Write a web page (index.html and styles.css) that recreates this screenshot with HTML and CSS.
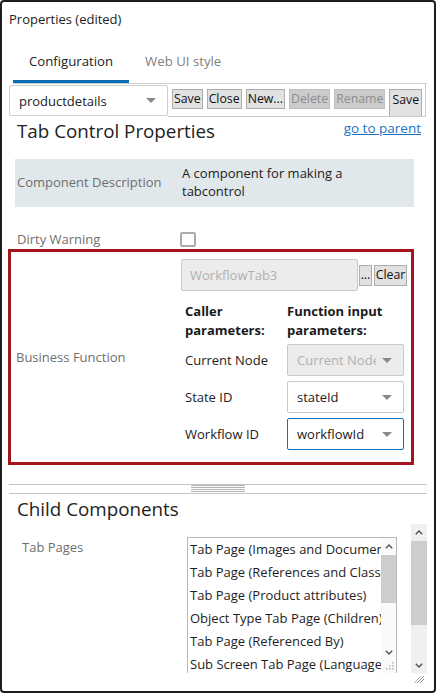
FILE: index.html
```html
<!DOCTYPE html>
<html>
<head>
<meta charset="utf-8">
<title>Properties</title>
<link rel="stylesheet" href="styles.css">
</head>
<body>
<div class="window">
  <div class="title">Properties (edited)</div>
  <div class="tabs">
    <div class="tab active">Configuration</div>
    <div class="tab">Web UI style</div>
  </div>
  <div class="toolbar">
    <div class="select main-select"><span class="sel-text">productdetails</span><span class="caret"></span></div>
    <div class="btnbar">
      <button class="btn">Save</button>
      <button class="btn">Close</button>
      <button class="btn">New...</button>
      <button class="btn" disabled>Delete</button>
      <button class="btn" disabled>Rename</button>
      <button class="btn btn-wrap">Save as</button>
    </div>
  </div>
  <div class="content">
    <div class="head-row">
      <h2 class="heading">Tab Control Properties</h2>
      <a class="link" href="#">go to parent</a>
    </div>
    <div class="desc-row">
      <div class="label">Component Description</div>
      <div class="desc-value">A component for making a tabcontrol</div>
    </div>
    <div class="dirty-row">
      <div class="label">Dirty Warning</div>
      <span class="checkbox"></span>
    </div>
    <div class="bf-box">
      <div class="label bf-label">Business Function</div>
      <div class="bf-main">
        <div class="bf-input-row">
          <div class="text-input">WorkflowTab3</div>
          <button class="btn btn-dots">...</button>
          <button class="btn btn-clear">Clear</button>
        </div>
        <div class="param-grid">
          <div class="param-head">Caller parameters:</div>
          <div class="param-head">Function input parameters:</div>
          <div class="param-label">Current Node</div>
          <div class="select param-select disabled"><span class="sel-text">Current Node</span><span class="caret"></span></div>
          <div class="param-label">State ID</div>
          <div class="select param-select"><span class="sel-text">stateId</span><span class="caret"></span></div>
          <div class="param-label">Workflow ID</div>
          <div class="select param-select focused"><span class="sel-text">workflowId</span><span class="caret"></span></div>
        </div>
      </div>
    </div>
  </div>
  <div class="splitter"><div class="grip"></div></div>
  <div class="child-head"><h2 class="heading">Child Components</h2></div>
  <div class="scrollpanel">
    <div class="panel-body">
      <div class="label tp-label">Tab Pages</div>
      <div class="listbox">
        <div class="list-items">
          <div class="item">Tab Page (Images and Documents)</div>
          <div class="item">Tab Page (References and Classifications)</div>
          <div class="item">Tab Page (Product attributes)</div>
          <div class="item">Object Type Tab Page (Children)</div>
          <div class="item">Tab Page (Referenced By)</div>
          <div class="item">Sub Screen Tab Page (Languages)</div>
        </div>
        <div class="mini-scroll">
          <div class="arrow mini-up"><svg width="8" height="5" viewBox="0 0 8 5"><polyline points="0.8,4.2 4,1 7.2,4.2" fill="none" stroke="#555" stroke-width="1.4"/></svg></div>
          <div class="thumb mini-thumb"></div>
          <div class="track-fill"></div>
          <div class="arrow mini-down"><svg width="8" height="5" viewBox="0 0 8 5"><polyline points="0.8,0.8 4,4 7.2,0.8" fill="none" stroke="#555" stroke-width="1.4"/></svg></div>
          <div class="mini-grip"><svg width="8" height="8" viewBox="0 0 8 8"><rect x="6" y="0" width="1.5" height="1.5" fill="#b5b5b5"/><rect x="3" y="3" width="1.5" height="1.5" fill="#b5b5b5"/><rect x="6" y="3" width="1.5" height="1.5" fill="#b5b5b5"/><rect x="0" y="6" width="1.5" height="1.5" fill="#b5b5b5"/><rect x="3" y="6" width="1.5" height="1.5" fill="#b5b5b5"/><rect x="6" y="6" width="1.5" height="1.5" fill="#b5b5b5"/></svg></div>
        </div>
      </div>
    </div>
    <div class="vscroll">
      <div class="arrow v-up"><svg width="8" height="5" viewBox="0 0 8 5"><polyline points="0.8,4.2 4,1 7.2,4.2" fill="none" stroke="#505050" stroke-width="1.4"/></svg></div>
      <div class="thumb v-thumb"></div>
      <div class="track-fill"></div>
      <div class="arrow v-down"><svg width="8" height="5" viewBox="0 0 8 5"><polyline points="0.8,0.8 4,4 7.2,0.8" fill="none" stroke="#505050" stroke-width="1.4"/></svg></div>
    </div>
  </div>
  <svg class="resize-grip" width="10" height="7" viewBox="0 0 10 7"><line x1="3" y1="7" x2="10" y2="0" stroke="#8a8a8a" stroke-width="1"/><line x1="6" y1="7" x2="10" y2="3" stroke="#8a8a8a" stroke-width="1"/><line x1="0" y1="7" x2="7" y2="0" stroke="#b0b0b0" stroke-width="1"/></svg>
</div>
</body>
</html>
```

FILE: styles.css
```css
* { box-sizing: border-box; }
html, body { margin: 0; padding: 0; background: #fff; }
body {
  font-family: "Open Sans", "Noto Sans", sans-serif;
  font-size: 13px;
  color: #222;
}
.window {
  width: 436px;
  height: 693px;
  border: 2px solid #1e1e1e;
  border-radius: 4px;
  position: relative;
  overflow: hidden;
  display: flex;
  flex-direction: column;
}
.title {
  padding: 8px 0 13px 7px;
  line-height: 18px;
  color: #222;
}
.tabs {
  display: flex;
  margin: 0 7px 0 11px;
  border-bottom: 1px solid #cfcfcf;
}
.tab {
  padding: 10px 16px 9px;
  line-height: 20px;
  font-size: 13.2px;
  color: #808080;
  border-bottom: 3px solid transparent;
}
.tab.active {
  color: #222;
  border-bottom-color: #0b6db5;
}
.toolbar {
  display: flex;
  align-items: flex-start;
}
.select {
  display: flex;
  align-items: center;
  justify-content: space-between;
  border: 1px solid #cfcfcf;
  border-radius: 2px;
  background: #fff;
  padding: 0 11px 0 9px;
  color: #222;
}
.sel-text {
  white-space: nowrap;
  overflow: hidden;
  flex: 1;
  min-width: 0;
}
.caret {
  width: 0;
  height: 0;
  border-left: 5px solid transparent;
  border-right: 5px solid transparent;
  border-top: 5px solid #8a8a8a;
  flex-shrink: 0;
  margin-left: 6px;
}
.main-select {
  margin: 1px 0 0 7px;
  width: 159px;
  height: 31px;
}
.btnbar {
  width: 258px;
  height: 33px;
  border-right: 1px solid #cccccc;
  border-bottom: 1px solid #cccccc;
  overflow: hidden;
  display: flex;
  gap: 4px;
  padding: 5px 0 0 4px;
  align-items: flex-start;
}
.btn {
  font-family: inherit;
  font-size: 12.3px;
  height: 20px;
  line-height: 18px;
  padding: 0 1px;
  border: 1px solid #adadad;
  background: #e1e1e1;
  color: #111;
  border-radius: 0;
  white-space: nowrap;
  flex-shrink: 0;
}
.btn:disabled {
  background: #cccccc;
  color: #8c8c8c;
  border-color: #bfbfbf;
}
.btn-wrap {
  height: auto;
  width: 33px;
  white-space: normal;
  line-height: 20px;
  padding: 0;
  text-align: center;
}
.content {
  padding: 0 20px 0 13px;
}
.head-row {
  display: flex;
  justify-content: space-between;
  align-items: flex-start;
  margin-top: 2px;
  margin-right: -7px;
}
.heading {
  margin: 0;
  font-size: 18.8px;
  font-weight: normal;
  line-height: 24px;
  padding-left: 2px;
  color: #222;
}
.link {
  font-size: 13.5px;
  line-height: 20px;
  color: #1a73c2;
  text-decoration: underline;
  margin-top: -1px;
}
.desc-row {
  margin-top: 16px;
  background: #e1e8eb;
  display: grid;
  grid-template-columns: 167px 1fr;
  align-items: center;
  padding: 5px 0 7px;
}
.label {
  color: #6f6f6f;
  padding-left: 2px;
  line-height: 18px;
}
.desc-value {
  line-height: 18px;
  width: 200px;
  color: #222;
}
.dirty-row {
  margin-top: 23px;
  display: grid;
  grid-template-columns: 165px 1fr;
  align-items: center;
  height: 18px;
}
.checkbox {
  display: block;
  width: 16px;
  height: 15px;
  border: 2px solid #ababab;
  border-radius: 2px;
}
.bf-box {
  margin: 1px 0 0 -7px;
  border: 3px solid #a3141d;
  display: flex;
}
.bf-label {
  width: 170px;
  flex-shrink: 0;
  padding-left: 5px;
  align-self: center;
}
.bf-main {
  flex: 1;
  padding: 7px 0 12px 0;
}
.bf-input-row {
  display: flex;
  align-items: center;
}
.text-input {
  width: 177px;
  height: 32px;
  border: 1px solid #c8c8c8;
  background: #ececec;
  color: #b0b0b0;
  border-radius: 2px;
  padding-left: 8px;
  display: flex;
  align-items: center;
}
.btn-dots {
  margin-left: 1px;
  width: 13px;
  height: 21px;
  padding: 0;
  text-align: center;
}
.btn-clear {
  margin-left: 2px;
  height: 21px;
  width: 33px;
  padding: 0;
  text-align: center;
}
.param-grid {
  display: grid;
  grid-template-columns: 102px 117px;
  row-gap: 5px;
  padding-left: 4px;
  margin-top: 11px;
  align-items: center;
}
.param-head {
  font-weight: bold;
  line-height: 19px;
  color: #1a1a1a;
  margin-bottom: -1px;
}
.param-label {
  line-height: 18px;
  color: #222;
}
.param-select {
  height: 32px;
  width: 117px;
  border-color: #c8c8c8;
}
.param-select.disabled {
  background: #ececec;
  color: #b0b0b0;
}
.param-select.focused {
  border-color: #1170c0;
}
.splitter {
  margin: 19px 7px 0 7px;
  height: 10px;
  border-top: 1px solid #c4c4c4;
  border-bottom: 1px solid #c4c4c4;
}
.grip {
  width: 54px;
  height: 7px;
  margin: 0 auto;
  background: repeating-linear-gradient(to bottom, #b4b4b4 0, #b4b4b4 1px, transparent 1px, transparent 2px);
}
.child-head {
  margin: 3px 0 0 13px;
}
.scrollpanel {
  margin-top: 3px;
  margin-right: 7px;
  height: 149px;
  display: flex;
}
.panel-body {
  flex: 1;
  overflow: hidden;
  display: flex;
  align-items: flex-start;
  padding-top: 13px;
}
.tp-label {
  width: 185px;
  flex-shrink: 0;
  padding-left: 20px;
  margin-top: 1px;
}
.listbox {
  width: 210px;
  height: 137px;
  flex-shrink: 0;
  border: 1px solid #b8b8b8;
  display: flex;
}
.list-items {
  flex: 1;
  min-width: 0;
  overflow: hidden;
  padding-left: 2px;
}
.item {
  line-height: 23px;
  white-space: nowrap;
  color: #1e1e1e;
}
.mini-scroll {
  width: 15px;
  flex-shrink: 0;
  display: flex;
  flex-direction: column;
  background: #fafafa;
}
.arrow {
  display: flex;
  align-items: center;
  justify-content: center;
}
.mini-up { height: 16px; }
.thumb { background: #cdcdcd; }
.mini-thumb { height: 48px; margin-top: 1px; }
.track-fill { flex: 1; }
.mini-down { height: 14px; }
.mini-grip {
  height: 14px;
  display: flex;
  align-items: flex-end;
  justify-content: flex-end;
  padding: 0 2px 3px 0;
}
.vscroll {
  width: 16px;
  flex-shrink: 0;
  display: flex;
  flex-direction: column;
  background: #f0f0f0;
}
.v-up { height: 17px; }
.v-thumb { height: 84px; }
.v-down { height: 16px; }
.resize-grip {
  position: absolute;
  right: 10px;
  bottom: 8px;
}
```
